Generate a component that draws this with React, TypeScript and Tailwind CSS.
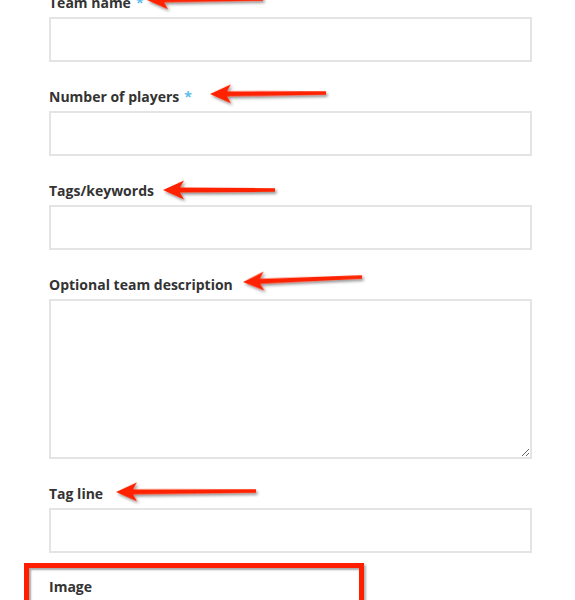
import React from "react";

type ArrowProps = { x1: number; y1: number; x2: number; y2: number };

function Arrow({ x1, y1, x2, y2 }: ArrowProps) {
  const dx = x2 - x1;
  const dy = y2 - y1;
  const len = Math.sqrt(dx * dx + dy * dy);
  const ang = (Math.atan2(dy, dx) * 180) / Math.PI;
  const pts = [
    [0, 0],
    [21, -9.5],
    [17, -2.6],
    [len, -1.8],
    [len, 1.8],
    [17, 2.6],
    [21, 9.5],
  ]
    .map((p) => p.join(","))
    .join(" ");
  return (
    <g transform={`translate(${x1} ${y1}) rotate(${ang})`}>
      <polygon points={pts} fill="#ff2400" filter="url(#sh)" strokeLinejoin="round" />
    </g>
  );
}

function Label({ text, req }: { text: string; req?: boolean }) {
  return (
    <label className="block h-[20px] leading-[20px] mb-[4px] text-[14px] font-bold text-[#333333]">
      {text}
      {req && <span className="text-[#5bbdea] ml-[5px]">*</span>}
    </label>
  );
}

function Field({ text, req }: { text: string; req?: boolean }) {
  return (
    <div className="mb-[25px]">
      <Label text={text} req={req} />
      <input
        type="text"
        className="block w-[483px] h-[45px] border-2 border-[#e4e4e4] bg-white outline-none"
      />
    </div>
  );
}

export default function App() {
  return (
    <div
      className="relative w-[575px] h-[600px] overflow-hidden bg-white"
      style={{ fontFamily: '"Open Sans", "Noto Sans", sans-serif' }}
    >
      <div className="mt-[-7px] pl-[49px]">
        <Field text="Team name" req />
        <Field text="Number of players" req />
        <Field text="Tags/keywords" />
        <div className="mb-[25px]">
          <Label text="Optional team description" />
          <textarea className="block w-[483px] h-[160px] border-2 border-[#e4e4e4] bg-white outline-none resize" />
        </div>
        <Field text="Tag line" />
      </div>
      <div className="mt-[-15px] ml-[24px] w-[340px] h-[60px] border-[5px] border-b-0 border-[#ff1e00] shadow-[inset_2px_2px_2px_rgba(0,0,0,0.35),2px_2px_2px_rgba(0,0,0,0.3)] pt-[9px] pl-[20px]">
        <Label text="Image" />
      </div>
      <svg className="absolute left-0 top-0 pointer-events-none" width={575} height={600}>
        <defs>
          <filter id="sh" x="-20%" y="-50%" width="140%" height="200%">
            <feDropShadow dx="1.5" dy="2" stdDeviation="1.5" floodColor="#000" floodOpacity="0.45" />
          </filter>
        </defs>
        <Arrow x1={147} y1={0} x2={263} y2={-1} />
        <Arrow x1={210} y1={94} x2={326} y2={93} />
        <Arrow x1={163} y1={190} x2={275} y2={190} />
        <Arrow x1={243} y1={282} x2={362} y2={277} />
        <Arrow x1={116} y1={492} x2={256} y2={491} />
      </svg>
    </div>
  );
}
